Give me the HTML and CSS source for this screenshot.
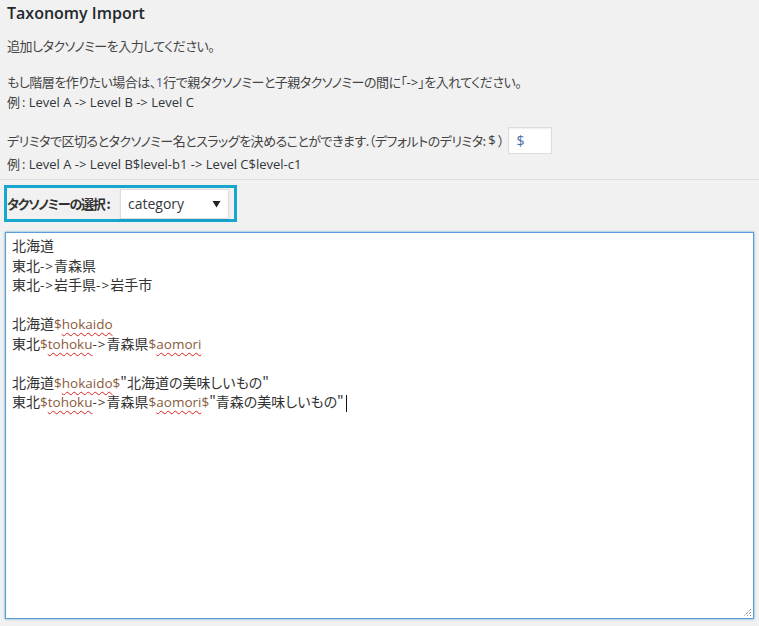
FILE: index.html
```html
<!DOCTYPE html>
<html lang="ja">
<head>
<meta charset="utf-8">
<title>Taxonomy Import</title>
<link rel="stylesheet" href="styles.css">
</head>
<body>
<div class="page">
  <h2 class="title">Taxonomy Import</h2>
  <p class="p1">追加しタクソノミーを入力してください。</p>
  <div class="p2">
    <div class="line">もし階層を作りたい場合は、<span class="num">1</span>行で親タクソノミーと子親タクソノミーの間に「<span class="lat">-&gt;</span>」を入れてください。</div>
    <div class="line">例 <span class="lat">: Level A -&gt; Level B -&gt; Level C</span></div>
  </div>
  <div class="p3">
    <div class="row">デリミタで区切るとタクソノミー名とスラッグを決めることができます.（デフォルトのデリミタ: <span class="lat">$</span> ） <span class="delim">$</span></div>
    <div class="line second">例 <span class="lat">: Level A -&gt; Level B$level-b1 -&gt; Level C$level-c1</span></div>
  </div>
</div>
<hr class="sep">
<div class="page2">
  <div class="select-box">
    <span class="label">タクソノミーの選択 :</span>
    <div class="select"><span class="val">category</span><svg class="arrow" width="9" height="8" viewBox="0 0 9 8"><path d="M0.5 1 L8.5 1 L4.5 7.5 Z" fill="#222"/></svg></div>
  </div>
  <div class="textarea">
    <div class="tl">北海道</div>
    <div class="tl">東北<span class="lat">-&gt;</span>青森県</div>
    <div class="tl">東北<span class="lat">-&gt;</span>岩手県<span class="lat">-&gt;</span>岩手市</div>
    <div class="tl">&nbsp;</div>
    <div class="tl">北海道<span class="slug"><span class="d">$</span><span class="sp">hokaido</span></span></div>
    <div class="tl">東北<span class="slug"><span class="d">$</span><span class="sp">tohoku</span></span><span class="lat">-&gt;</span>青森県<span class="slug"><span class="d">$</span><span class="sp">aomori</span></span></div>
    <div class="tl">&nbsp;</div>
    <div class="tl">北海道<span class="slug"><span class="d">$</span><span class="sp">hokaido</span><span class="d">$</span></span>"北海道の美味しいもの"</div>
    <div class="tl">東北<span class="slug"><span class="d">$</span><span class="sp">tohoku</span></span><span class="lat">-&gt;</span>青森県<span class="slug"><span class="d">$</span><span class="sp">aomori</span><span class="d">$</span></span>"青森の美味しいもの"<span class="caret"></span></div>
    <svg class="grip" width="10" height="10" viewBox="0 0 10 10"><path d="M9 2 L2 9 M9 5 L5 9 M9 8 L8 9" stroke="#555" stroke-width="1" stroke-dasharray="1 1"/></svg>
  </div>
</div>
</body>
</html>
```

FILE: styles.css
```css
html, body {
  margin: 0;
  padding: 0;
  background: #f1f1f1;
}
body {
  font-family: "Noto Sans CJK JP", "Noto Sans", sans-serif;
  font-feature-settings: "palt";
  font-size: 13px;
  color: #444;
  width: 759px;
  height: 626px;
  overflow: hidden;
}
.page {
  padding: 0 7px;
  letter-spacing: -0.5px;
}
.title {
  margin: 0;
  font-family: "Open Sans", "Noto Sans", sans-serif;
  font-weight: 600;
  font-size: 16px;
  line-height: 26px;
  letter-spacing: 0;
  color: #23282d;
}
.p1 {
  margin: 10px 0 0;
  line-height: 20px;
}
.p2 {
  margin-top: 16px;
  line-height: 19px;
}
.lat {
  font-family: "Open Sans", "Noto Sans", sans-serif;
  font-size: 13px;
  letter-spacing: 0;
  color: #32373c;
}
.num {
  font-family: "Open Sans", sans-serif;
  letter-spacing: 0;
  color: #3a5a9a;
}
.p3 {
  margin-top: 15px;
  line-height: 19px;
}
.p3 .row {
  display: flex;
  align-items: center;
  height: 26px;
  white-space: pre;
}
.p3 .second {
  margin-top: 1px;
}
.delim {
  display: inline-flex;
  align-items: center;
  box-sizing: border-box;
  width: 44px;
  height: 27px;
  margin-left: 2px;
  padding-left: 7px;
  background: #fff;
  border: 1px solid #ddd;
  box-shadow: inset 0 1px 2px rgba(0,0,0,.07);
  font-family: "Open Sans", sans-serif;
  font-size: 14px;
  letter-spacing: 0;
  color: #4a6ea8;
}
.sep {
  margin: 5px 0 0;
  border: 0;
  border-top: 1px solid #dedede;
  height: 0;
}
.page2 {
  padding: 5px 6px 0 4px;
}
.select-box {
  display: inline-flex;
  align-items: center;
  gap: 6px;
  box-sizing: border-box;
  width: 233px;
  height: 37px;
  border: 3px solid #17a6cc;
  padding: 0 5px 0 0;
}
.label {
  font-weight: 700;
  color: #333;
  letter-spacing: -1.2px;
  white-space: nowrap;
}
.select {
  display: flex;
  align-items: center;
  justify-content: space-between;
  box-sizing: border-box;
  width: 109px;
  height: 30px;
  margin-left: auto;
  padding: 0 7px 0 7px;
  background: #fff;
  border: 1px solid #ddd;
  box-shadow: 0 1px 2px rgba(0,0,0,.07);
}
.val {
  font-family: "Open Sans", sans-serif;
  font-size: 14px;
  color: #32373c;
}
.textarea {
  position: relative;
  box-sizing: border-box;
  width: 749px;
  height: 387px;
  margin: 10px 0 0 1px;
  padding: 3px 6px;
  background: #fff;
  border: 1px solid #5b9dd9;
  box-shadow: 0 0 2px rgba(30,140,190,.8);
  font-size: 14px;
  color: #333;
}
.tl {
  line-height: 19.5px;
  height: 19.5px;
  white-space: pre;
}
.tl .lat {
  font-size: 13.5px;
  letter-spacing: 1px;
  color: #333;
}
.slug {
  font-family: "Open Sans", sans-serif;
  font-size: 13.5px;
  color: #8a5a3c;
}
.sp {
  text-decoration: underline wavy #e02020;
  text-decoration-thickness: 1px;
  text-underline-offset: 3px;
}
.caret {
  display: inline-block;
  width: 1px;
  height: 17px;
  margin-left: 2px;
  background: #111;
  vertical-align: middle;
}
.grip {
  position: absolute;
  right: 1px;
  bottom: 1px;
}
```
